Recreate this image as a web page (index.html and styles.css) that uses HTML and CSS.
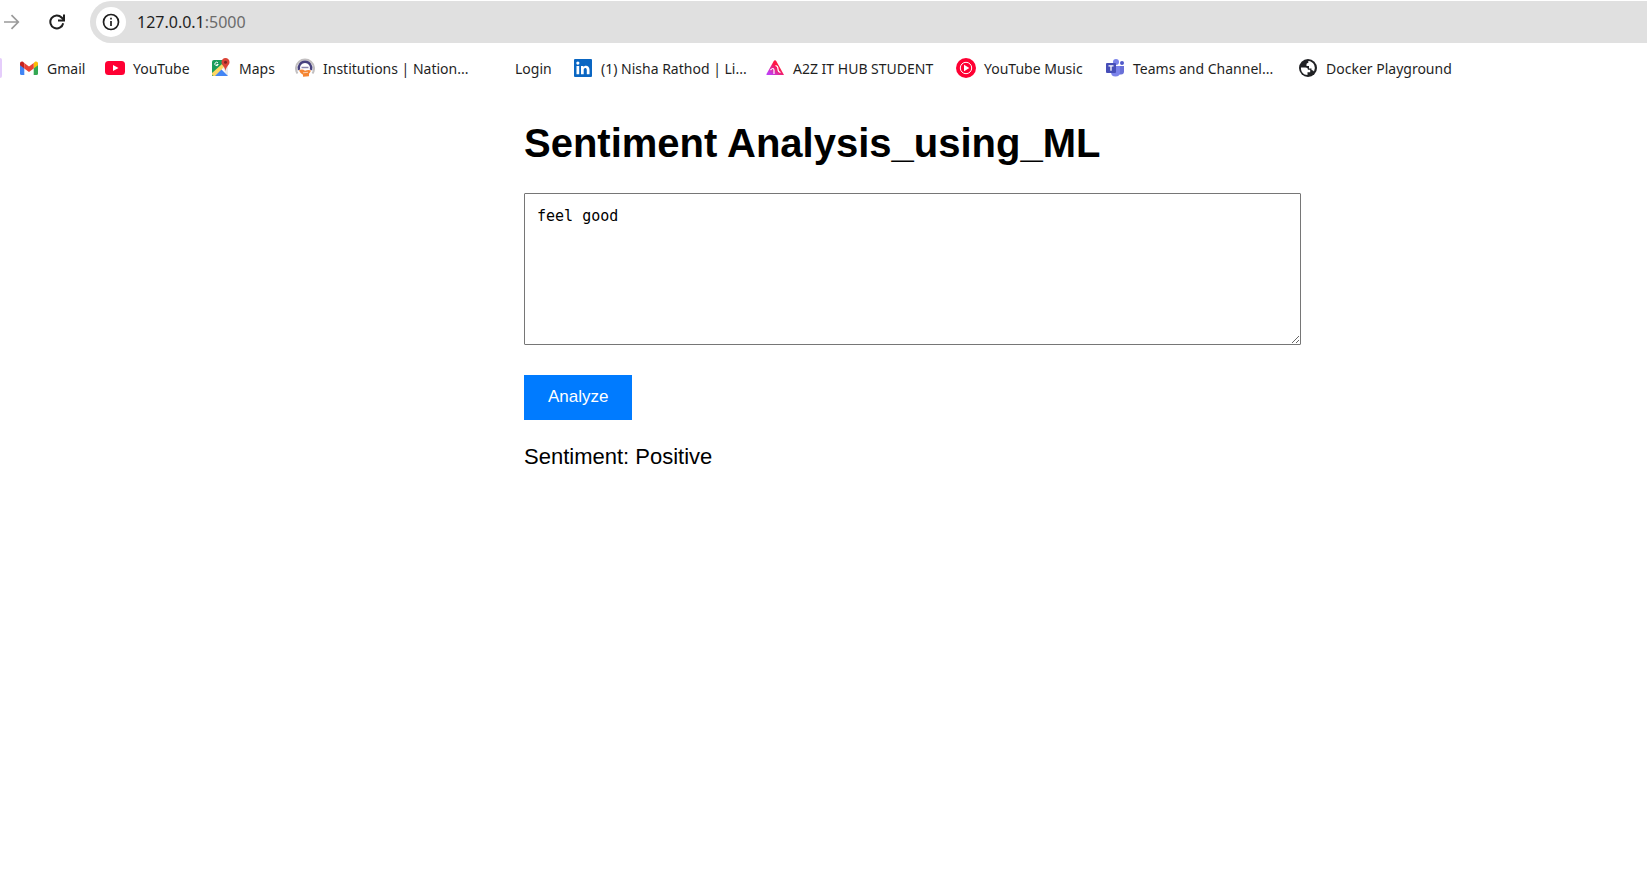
FILE: index.html
```html
<!DOCTYPE html>
<html lang="en">
<head>
<meta charset="utf-8">
<title>Sentiment Analysis</title>
<link rel="stylesheet" href="styles.css">
</head>
<body>
<header class="browser">
  <div class="toolbar">
    <button class="tool forward" aria-label="Forward"><svg width="16" height="16" viewBox="0 0 16 16" fill="none" stroke="#9a9a9a" stroke-width="1.7"><path d="M0 8h14M7.500 1.200 14.300 8l-6.800 6.800"/></svg></button>
    <button class="tool reload" aria-label="Reload"><svg width="16" height="16" viewBox="0 0 16 16" fill="none" stroke="#1f1f1f" stroke-width="2"><path d="M14.200 9.300A6.500 6.500 0 1 1 12.600 3.500L14.500 5.500"/><path d="M15 .5V6.500H9"/></svg></button>
    <div class="address">
      <button class="site-info" aria-label="Site information"><svg width="18" height="18" viewBox="0 0 18 18" fill="none" stroke="#1f1f1f" stroke-width="1.7"><circle cx="9" cy="9" r="7.500"/><path d="M9 8v5M9 4.800v1.800"/></svg></button>
      <span class="url">127.0.0.1<span class="port">:5000</span></span>
    </div>
  </div>
  <nav class="bookmarks" aria-label="Bookmarks">
    <span class="group-chip"></span>
    <a class="bookmark" href="#"><svg class="icon" viewBox="0 0 20 20"><path fill="#4285f4" d="M1 5.500 5.300 8.500V17H2.500Q1 17 1 15.500z"/><path fill="#34a853" d="M14.700 8.500 19 5.500v10q0 1.500-1.500 1.500h-2.800z"/><path fill="#fbbc04" d="M14.700 5 16 3.800c1.300-1 3 0 3 1.500v2L14.700 10.500z"/><path fill="#c5221f" d="M1 5.300c0-1.500 1.700-2.500 3-1.500L5.300 5v5.500L1 7.300z"/><path fill="#ea4335" d="M5.300 4.900 10 8.400l4.700-3.500v5.600L10 14l-4.700-3.500z"/></svg><span>Gmail</span></a>
    <a class="bookmark" href="#"><svg class="icon" viewBox="0 0 20 20"><rect y="3" width="20" height="14" rx="3.500" fill="#ff0033"/><path fill="#fff" d="m8 7 5.500 3L8 13z"/></svg><span>YouTube</span></a>
    <a class="bookmark" href="#"><svg class="icon" viewBox="0 0 20 20"><path fill="#1a9c5b" d="M3 2h10v6L3 18H1V4q0-2 2-2z"/><path fill="#e8eaed" d="m12 10 5-4v10q0 2-1 2z"/><path fill="#4285f4" d="m10 11 7 7H3z"/><path fill="#fdd663" d="m1 15 10-9 2 3L4 18H3Q1 18 1 16z"/><path d="M7 5A1.700 1.700 0 1 0 7.200 6.500H5.500" fill="none" stroke="#fff"/><path fill="#db4437" d="M14.500 0a4 4 0 0 1 4 4.200c0 3-3.500 4-4 9-.5-5-4-6-4-9a4 4 0 0 1 4-4.200z"/><circle cx="14.500" cy="4.200" r="1.500" fill="#7b231e"/></svg><span>Maps</span></a>
    <a class="bookmark" href="#"><svg class="icon" viewBox="0 0 20 20" fill="none"><path d="M2.500 15.500A9 9 0 1 1 17.500 15.500" stroke="#c2bfc0" stroke-width="2"/><path d="M4 12A6.300 6.300 0 1 1 16 12" stroke="#46417d" stroke-width="2.500"/><path d="M6.500 9.500h7" stroke="#8985ac" stroke-width="1.500"/><path d="M4 12.500q3-2 6 .2 3-1 6-.3-1 2.300-2 3.300v2.500l-6 .5v-2q-3-1.500-4-4.200z" fill="#f58532"/><path d="m8 14.800 5-.5" stroke="#fff" stroke-width=".6"/></svg><span>Institutions | Nation...</span></a>
    <a class="bookmark" href="#"><span class="icon"></span><span>Login</span></a>
    <a class="bookmark" href="#"><svg class="icon" viewBox="0 0 20 20"><rect x="1" y="1" width="18" height="18" rx="1" fill="#0a66c2"/><path fill="#fff" d="M3.500 8h2.700v8.300H3.500zM8 8h2.500v1.200c1.500-2.300 6-1.700 6 2.500v4.600h-2.700v-4.100c0-3-3.100-2.500-3.100-.2v4.300H8z"/><circle cx="4.850" cy="5.100" r="1.600" fill="#fff"/></svg><span>(1) Nisha Rathod | Li...</span></a>
    <a class="bookmark" href="#"><svg class="icon" viewBox="0 0 20 20"><defs><linearGradient id="a2z" x1="0" y1="1" x2="1" y2="0"><stop offset=".15" stop-color="#c13df0"/><stop offset=".6" stop-color="#ff1744"/></linearGradient></defs><path fill="url(#a2z)" d="M8.500 3.500Q10 1 11.500 3.500L19 17H2q-1 0-.5-1z"/><path d="M5.500 12Q8.500 9 9 12v4M10.500 7.500Q13 8 13 11t2.500 3.500" fill="none" stroke="#fff" stroke-width="1.200"/></svg><span>A2Z IT HUB STUDENT</span></a>
    <a class="bookmark" href="#"><svg class="icon" viewBox="0 0 20 20"><circle cx="10" cy="10" r="10" fill="#ff0033"/><circle cx="10" cy="10" r="5.700" fill="none" stroke="#fff" stroke-width="1"/><path fill="#fff" d="m8 6.800 5.300 3.200L8 13.200z"/></svg><span>YouTube Music</span></a>
    <a class="bookmark" href="#"><svg class="icon" viewBox="0 0 20 20"><circle cx="11" cy="4" r="3" fill="#7b83eb"/><circle cx="17" cy="5" r="2" fill="#5059c9"/><path fill="#6970d8" d="M14 8h5v5.500q0 3-3 3h-2z"/><path fill="#7b83eb" d="M6 8h9v6q0 4.500-4.500 4.500T6 14z"/><rect x="1" y="5" width="10" height="10" rx="1" fill="#464eb8"/><path d="M3.500 7.800h5M6 7.800v5" stroke="#fff" stroke-width="1.300"/></svg><span>Teams and Channel...</span></a>
    <a class="bookmark" href="#"><svg class="icon" viewBox="0 0 20 20"><circle cx="10" cy="10" r="9" fill="#202124"/><path fill="#fff" d="M3 9.500h4.500q2.500 0 2.500 2.200h2.200v2.500H9.500V17C5.500 17 2.500 13.500 3 9.500z"/><path fill="#fff" d="M8.500 8V6.200q0-1.200 1.800-1.200V3.100q4 .3 5.900 3.900 1.600 3.500-.2 6.500-.8-1.500-2.500-1.500v-1.500H11V8z"/></svg><span>Docker Playground</span></a>
  </nav>
</header>
<main class="page">
  <h1 class="title">Sentiment Analysis_using_ML</h1>
  <form class="form">
    <textarea class="input" aria-label="Text to analyze" spellcheck="false">feel good</textarea>
    <button class="analyze" type="button">Analyze</button>
  </form>
  <p class="result">Sentiment: Positive</p>
</main>
</body>
</html>
```

FILE: styles.css
```css
* { box-sizing: border-box; }
body { margin: 0; background: #fff; color: #000; font-family: "Liberation Sans", Arial, sans-serif; }
button { border: 0; padding: 0; background: none; }
svg { display: block; }

.browser { font-family: "Noto Sans", "Open Sans", sans-serif; color: #1f1f1f; }
.toolbar { display: flex; align-items: center; padding-top: 1px; }
.forward { margin-left: 4px; }
.reload { margin: 0 25px 0 29px; }
.address { flex: 1; display: flex; align-items: center; gap: 11px; height: 42px; padding-left: 6px; border-radius: 21px 0 0 21px; background: #e0e0e0; }
.site-info { display: grid; place-items: center; width: 30px; height: 30px; border-radius: 50%; background: #fff; }
.url { font-size: 16px; }
.port { color: #6b6b6b; }

.bookmarks { display: grid; grid-template-columns: 19px 86px 106px 84px 192px 86px 192px 191px 149px 193px auto; align-items: center; height: 50px; }
.group-chip { width: 2px; height: 20px; border-radius: 0 2px 2px 0; background: #e5cdfb; }
.bookmark { display: flex; align-items: center; gap: 8px; color: inherit; font-size: 14px; text-decoration: none; white-space: nowrap; }
.icon { flex: none; width: 20px; height: 20px; }

.page { width: min(100%, 955px); margin: 0 auto; padding: 27px 0 40px 178px; }
.title { margin: 0 0 27px; font-size: 40px; line-height: 46px; }
.form { display: flex; flex-direction: column; align-items: flex-start; gap: 30px; }
.input { width: 100%; height: 152px; padding: 12px; border: 1px solid #767676; border-radius: 1px; background: #fff; color: #000; font: 15px/20px "DejaVu Sans Mono", monospace; resize: both; }
.analyze { padding: 12px 24px 14px; background: #007bff; color: #fff; font: 17px/19px "Liberation Sans", Arial, sans-serif; }
.result { margin: 24px 0 0; font-size: 22px; line-height: 26px; }
```
